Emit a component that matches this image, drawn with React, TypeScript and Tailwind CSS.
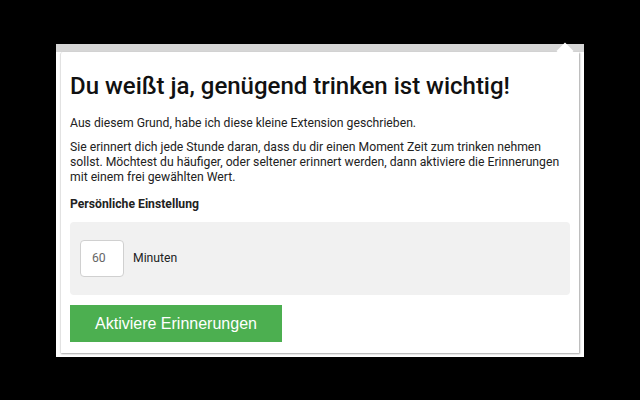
export default function App() {
  return (
    <div className="h-[400px] w-[640px] bg-black pt-[44px] pl-[56px] font-['Roboto',sans-serif]">
      <div className="relative h-[313px] w-[528px] border-t-[8px] border-[#d6d6d6] bg-white pl-[4px]">
        <div className="relative h-[301px] w-[519px] rounded-tl-[3px] border-l border-[#e2e2e2] bg-white pl-[9px] pr-[9px] shadow-[1px_1px_2px_rgba(0,0,0,0.35)]">
          <div className="absolute -top-[7px] right-[8px] h-[12px] w-[12px] rotate-45 bg-white" />
          <h1 className="pt-[18px] text-[24px] font-medium leading-[32px] text-[#111]">
            Du weißt ja, genügend trinken ist wichtig!
          </h1>
          <p className="mt-[14px] text-[12.2px] leading-[15px] text-[#222]">
            Aus diesem Grund, habe ich diese kleine Extension geschrieben.
          </p>
          <p className="mt-[9px] w-[494px] text-[12.2px] leading-[15px] text-[#222]">
            Sie erinnert dich jede Stunde daran, dass du dir einen Moment Zeit zum trinken nehmen sollst. Möchtest du
            häufiger, oder seltener erinnert werden, dann aktiviere die Erinnerungen mit einem frei gewählten Wert.
          </p>
          <h2 className="mt-[12px] text-[12.2px] font-bold leading-[15px] text-[#222]">Persönliche Einstellung</h2>
          <div className="mt-[10px] flex h-[73px] w-[500px] items-center gap-[9px] rounded-[4px] bg-[#f1f1f1] px-[10px]">
            <div className="flex h-[37px] w-[44px] items-center rounded-[4px] border border-[#d0d0d0] bg-white pl-[11px] text-[12.2px] text-[#666]">
              60
            </div>
            <span className="text-[12.2px] text-[#222]">Minuten</span>
          </div>
          <button className="mt-[10px] flex h-[37px] w-[212px] items-center justify-center bg-[#4caf50] font-['Liberation_Sans',sans-serif] text-[16px] text-white">
            Aktiviere Erinnerungen
          </button>
        </div>
      </div>
    </div>
  );
}
